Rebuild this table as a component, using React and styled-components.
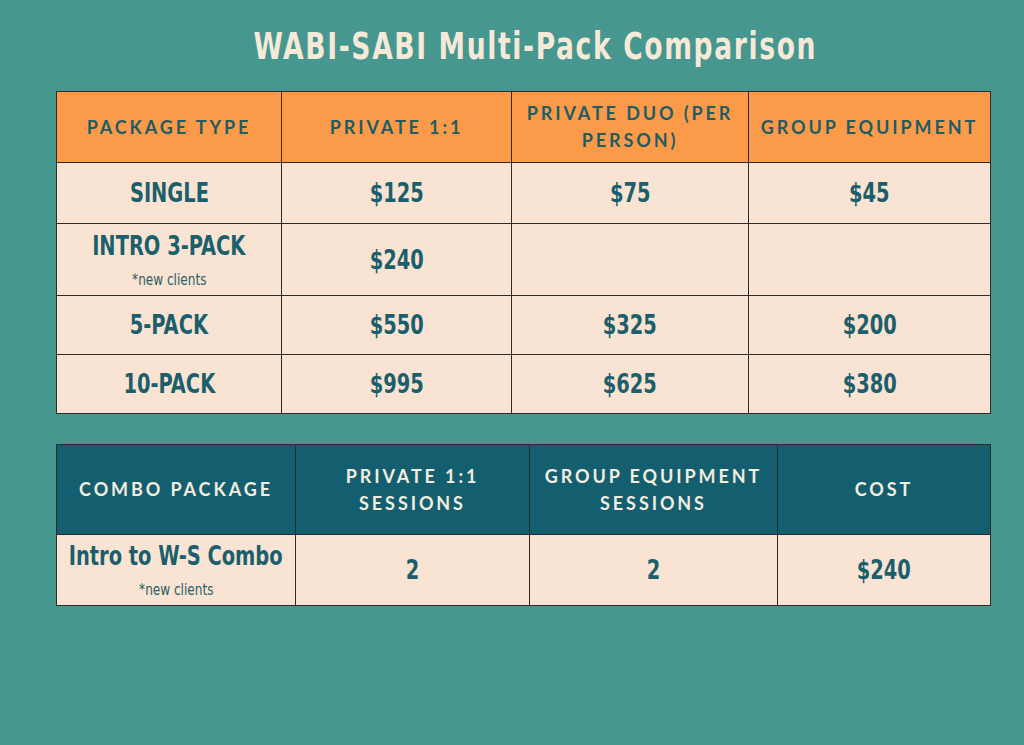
import styled, { createGlobalStyle } from 'styled-components';

const GlobalStyle = createGlobalStyle`
  html, body {
    margin: 0;
    padding: 0;
    background: #45978f;
  }
`;

const PRICES = [
  { name: 'SINGLE', values: ['$125', '$75', '$45'], h: 60 },
  { name: 'INTRO 3-PACK', note: '*new clients', values: ['$240', '', ''], h: 71 },
  { name: '5-PACK', values: ['$550', '$325', '$200'], h: 58 },
  { name: '10-PACK', values: ['$995', '$625', '$380'], h: 58 },
];

const App = () => {
  return (
    <Page>
      <GlobalStyle />
      <Title>
        <Narrow>WABI-SABI Multi-Pack Comparison</Narrow>
      </Title>

      <Table>
        <colgroup>
          <col style={{ width: 225 }} />
          <col style={{ width: 230 }} />
          <col style={{ width: 237 }} />
          <col style={{ width: 242 }} />
        </colgroup>
        <thead>
          <tr>
            <Head $tone='orange' $h={70}>PACKAGE TYPE</Head>
            <Head $tone='orange'>PRIVATE 1:1</Head>
            <Head $tone='orange'>PRIVATE DUO (PER<br />PERSON)</Head>
            <Head $tone='orange'>GROUP EQUIPMENT</Head>
          </tr>
        </thead>
        <tbody>
          {PRICES.map(row => (
            <tr key={row.name}>
              <Cell $h={row.h}>
                <Stack>
                  <Narrow>{row.name}</Narrow>
                  {row.note && <Note>{row.note}</Note>}
                </Stack>
              </Cell>
              {row.values.map((v, i) => (
                <Cell key={i}>
                  <Stack>
                    <Narrow>{v}</Narrow>
                  </Stack>
                </Cell>
              ))}
            </tr>
          ))}
        </tbody>
      </Table>

      <Table $gap={30}>
        <colgroup>
          <col style={{ width: 239 }} />
          <col style={{ width: 234 }} />
          <col style={{ width: 248 }} />
          <col style={{ width: 213 }} />
        </colgroup>
        <thead>
          <tr>
            <Head $tone='dark' $h={89}>COMBO PACKAGE</Head>
            <Head $tone='dark'>PRIVATE 1:1<br />SESSIONS</Head>
            <Head $tone='dark'>GROUP EQUIPMENT<br />SESSIONS</Head>
            <Head $tone='dark'>COST</Head>
          </tr>
        </thead>
        <tbody>
          <tr>
            <Cell $h={70}>
              <Stack>
                <Narrow>Intro to W-S Combo</Narrow>
                <Note>*new clients</Note>
              </Stack>
            </Cell>
            <Cell><Stack><Narrow>2</Narrow></Stack></Cell>
            <Cell><Stack><Narrow>2</Narrow></Stack></Cell>
            <Cell><Stack><Narrow>$240</Narrow></Stack></Cell>
          </tr>
        </tbody>
      </Table>
    </Page>
  );
};

const Page = styled.div`
  width: 1024px;
  height: 745px;
  box-sizing: border-box;
  padding: 24px 34px 0 56px;
  background: #45978f;
`;

const Narrow = styled.span`
  display: inline-block;
  white-space: nowrap;
  transform: scaleX(0.8);
`;

const Title = styled.h1`
  margin: 0 0 22px;
  padding-left: 24px;
  text-align: center;
  font-family: 'DejaVu Sans Condensed', 'Liberation Sans', sans-serif;
  font-weight: 700;
  font-size: 37px;
  line-height: 45px;
  letter-spacing: 2px;
  color: #f6e9d7;
`;

const Table = styled.table`
  width: 934px;
  table-layout: fixed;
  border-collapse: collapse;
  margin-top: ${p => p.$gap || 0}px;
  border: 1.5px solid #2b2b2b;
`;

const Head = styled.th`
  height: ${p => p.$h || 'auto'}px;
  padding: 0 4px;
  border: 1.5px solid #2b2b2b;
  background: ${p => (p.$tone === 'dark' ? '#135f70' : '#fb9a48')};
  color: ${p => (p.$tone === 'dark' ? '#f4ecdf' : '#1f5c63')};
  font-family: Lato, 'Noto Sans', sans-serif;
  font-weight: 700;
  font-size: 18px;
  line-height: 27px;
  letter-spacing: 2.9px;
  text-align: center;
  vertical-align: middle;
  white-space: nowrap;
`;

const Cell = styled.td`
  height: ${p => p.$h || 'auto'}px;
  padding: 0;
  border: 1.5px solid #2b2b2b;
  background: #f9e4d3;
  color: #1c5f6c;
  font-family: 'DejaVu Sans Condensed', 'Liberation Sans', sans-serif;
  font-weight: 700;
  font-size: 27px;
  line-height: 30px;
  vertical-align: middle;
`;

const Stack = styled.div`
  display: flex;
  flex-direction: column;
  align-items: center;
`;

const Note = styled.span`
  display: inline-block;
  margin-top: 10px;
  font-weight: 400;
  font-size: 16px;
  line-height: 18px;
  color: #2c5d64;
  white-space: nowrap;
  transform: scaleX(0.84);
`;

export default App;
